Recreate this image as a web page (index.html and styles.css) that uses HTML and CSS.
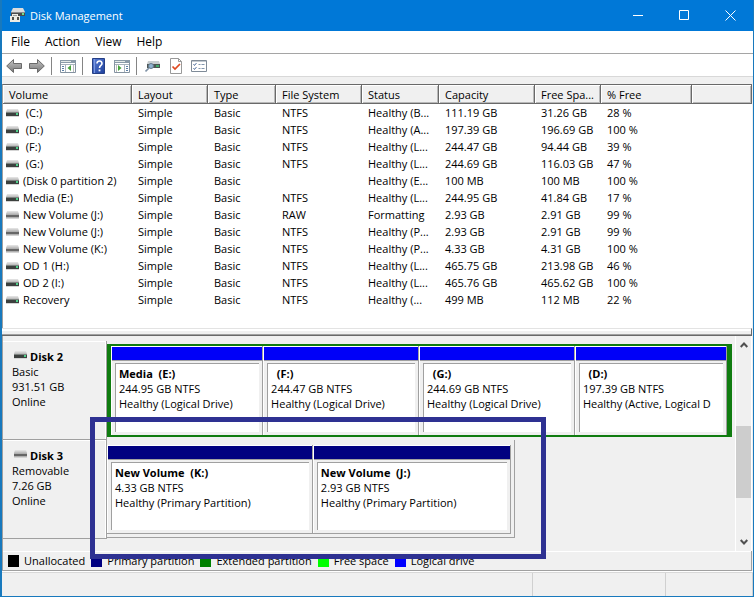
FILE: index.html
```html
<!DOCTYPE html>
<html lang="en">
<head>
<meta charset="utf-8">
<title>Disk Management</title>
<link rel="stylesheet" href="styles.css">
</head>
<body>
<svg class="defs" aria-hidden="true">
  <defs>
    <linearGradient id="lid" x1="0" y1="0" x2="0" y2="1"><stop offset="0" stop-color="#e8e8e8"/><stop offset="1" stop-color="#b8b8b8"/></linearGradient>
    <linearGradient id="steel" x1="0" y1="0" x2="0" y2="1"><stop offset="0" stop-color="#c4c4c4"/><stop offset="1" stop-color="#777"/></linearGradient>
    <linearGradient id="book" x1="0" y1="0" x2="1" y2="1"><stop offset="0" stop-color="#5b7fd6"/><stop offset="1" stop-color="#1d3f9c"/></linearGradient>
    <symbol id="drive" viewBox="0 0 13 8"><path d="M1 0h11l1 3H0z" fill="url(#lid)"/><path d="M0 3h13v4H0z" fill="#3c403e"/><path d="M0 3h13v1H0z" fill="#7d8380"/><path d="M10 4h2v2h-2z" fill="#4fd08a"/><path d="M0 7h13v1H0z" fill="#d4d4d4"/></symbol>
    <symbol id="removable" viewBox="0 0 13 8"><path d="M1 0h11l1 3H0z" fill="url(#lid)"/><path d="M0 3h13v4H0z" fill="#b0b0b0"/><path d="M0 4h13v2H0z" fill="#666"/><path d="M0 7h13v1H0z" fill="#d4d4d4"/></symbol>
  </defs>
</svg>
<div class="window">
  <header class="titlebar">
    <svg class="app-icon" viewBox="0 0 16 15"><path d="M4 0h10l2 4H2z" fill="#dcdcdc"/><path d="M2 4h14v4H2z" fill="#4b4b4b"/><path d="M2 4h14v1H2z" fill="#8b8b8b"/><path d="M13 5h2v2h-2z" fill="#6fe08f"/><path d="M3 6h6v2h2v6H1V8h2z" fill="#ecebe4"/><path d="M4 7h4v1H4z" fill="#999"/><path d="M3 9h2v3H3zM8 9h2v3H8z" fill="#53504a"/></svg>
    <h1>Disk Management</h1>
    <button class="caption" aria-label="Minimize"><svg viewBox="0 0 11 11"><path d="M0 5.5h10"/></svg></button>
    <button class="caption" aria-label="Maximize"><svg viewBox="0 0 11 11"><path d="M.5 .5h9v9h-9z"/></svg></button>
    <button class="caption" aria-label="Close"><svg viewBox="0 0 11 11"><path d="M.5 .5l10 10M10.5 .5l-10 10"/></svg></button>
  </header>
  <nav class="menubar"><button>File</button><button>Action</button><button>View</button><button>Help</button></nav>
  <div class="toolbar">
    <button aria-label="Back"><svg viewBox="0 0 16 16"><path d="M.7 8L7.5 1.5v4h8v5h-8v4z" fill="url(#steel)" stroke="#6a6a6a"/></svg></button>
    <button aria-label="Forward"><svg viewBox="0 0 16 16"><path d="M15.3 8L8.5 1.5v4h-8v5h8v4z" fill="url(#steel)" stroke="#6a6a6a"/></svg></button>
    <i class="sep"></i>
    <button aria-label="Show or hide console tree"><svg viewBox="0 0 16 16"><path d="M.5 2.5h15v12H.5z" fill="#fff" stroke="#8492a0"/><path d="M0 2h16v3H0z" fill="#8a9aa8"/><path d="M1 3h10v1H1z" fill="#e1e8e6"/><path d="M1 6.5h14M5.5 6v8" stroke="#a8b4be"/><path d="M2 8.5h2M2 10.5h2M2 12.5h2" stroke="#5c7fa5"/><path d="M11 7v6L7.5 10z" fill="#46a33c"/><path d="M13.5 7v7" stroke="#bbb"/></svg></button>
    <i class="sep"></i>
    <button aria-label="Help"><svg viewBox="0 0 16 16"><path d="M1.5 .5h12v15h-12z" fill="url(#book)" stroke="#253f86"/><path d="M3.5 1v14" stroke="#7997df"/><path d="M6 5.5c0-3.500 5-3.200 5 0 0 2-2.500 2-2.500 4.500" fill="none" stroke="#fff" stroke-width="1.6"/><path d="M7.6 11.5h1.8v1.8H7.6z" fill="#fff"/></svg></button>
    <button aria-label="Show or hide action pane"><svg viewBox="0 0 16 16"><path d="M.5 2.5h15v12H.5z" fill="#fff" stroke="#8492a0"/><path d="M0 2h16v3H0z" fill="#8a9aa8"/><path d="M1 3h10v1H1z" fill="#e1e8e6"/><path d="M1 6.5h14M10.5 6v8" stroke="#a8b4be"/><path d="M12 8.5h2M12 10.5h2M12 12.5h2" stroke="#5c7fa5"/><path d="M4 7v6l3.500-3z" fill="#46a33c"/><path d="M2.500 7v7" stroke="#bbb"/></svg></button>
    <i class="sep"></i>
    <button aria-label="Rescan disks"><svg viewBox="0 0 16 16"><path d="M3 3h11l1 3H2z" fill="#c9ced0"/><path d="M2 6h13v4H2z" fill="#4d5654"/><path d="M11 7h3v2h-3z" fill="#3fa969"/><circle cx="6" cy="8" r="2.500" fill="#8fb3d0" stroke="#667c8e"/><path d="M4 10l-3.500 3.500" stroke="#7e91a5" stroke-width="1.6"/></svg></button>
    <button aria-label="Properties"><svg viewBox="0 0 16 16"><path d="M2.5 .5h8l3 3v12h-11z" fill="#fff" stroke="#999"/><path d="M10.5 .5v3h3" fill="none" stroke="#999"/><path d="M4.500 8.500l2.500 2.500 5-5" fill="none" stroke="#e04a20" stroke-width="1.7"/></svg></button>
    <button aria-label="Options"><svg viewBox="0 0 16 16"><path d="M.5 2.5h15v11H.5z" fill="#fff" stroke="#7f8b98"/><path d="M1 3h14v1H1z" fill="#c2cad2"/><path d="M2.500 6l1 1.500 2-2.500M2.500 10l1 1.500L5.500 9" fill="none" stroke="#5876a4"/><path d="M7.500 6.500h2M10.500 6.500h3M7.500 10.500h2M10.500 10.500h3" stroke="#8296ae"/></svg></button>
  </div>
  <main>
    <section class="volumes">
      <table>
        <colgroup><col class="c-volume"><col class="c-layout"><col class="c-type"><col class="c-fs"><col class="c-status"><col class="c-capacity"><col class="c-free"><col class="c-percent"><col></colgroup>
        <thead><tr><th>Volume</th><th>Layout</th><th>Type</th><th>File System</th><th>Status</th><th>Capacity</th><th>Free Spa...</th><th>% Free</th><th></th></tr></thead>
        <tbody>
          <tr><td><svg class="drive"><use href="#drive"/></svg>&nbsp;(C:)</td><td>Simple</td><td>Basic</td><td>NTFS</td><td>Healthy (B...</td><td>111.19 GB</td><td>31.26 GB</td><td>28 %</td><td></td></tr>
          <tr><td><svg class="drive"><use href="#drive"/></svg>&nbsp;(D:)</td><td>Simple</td><td>Basic</td><td>NTFS</td><td>Healthy (A...</td><td>197.39 GB</td><td>196.69 GB</td><td>100 %</td><td></td></tr>
          <tr><td><svg class="drive"><use href="#drive"/></svg>&nbsp;(F:)</td><td>Simple</td><td>Basic</td><td>NTFS</td><td>Healthy (L...</td><td>244.47 GB</td><td>94.44 GB</td><td>39 %</td><td></td></tr>
          <tr><td><svg class="drive"><use href="#drive"/></svg>&nbsp;(G:)</td><td>Simple</td><td>Basic</td><td>NTFS</td><td>Healthy (L...</td><td>244.69 GB</td><td>116.03 GB</td><td>47 %</td><td></td></tr>
          <tr><td><svg class="drive"><use href="#drive"/></svg>(Disk 0 partition 2)</td><td>Simple</td><td>Basic</td><td></td><td>Healthy (E...</td><td>100 MB</td><td>100 MB</td><td>100 %</td><td></td></tr>
          <tr><td><svg class="drive"><use href="#drive"/></svg>Media (E:)</td><td>Simple</td><td>Basic</td><td>NTFS</td><td>Healthy (L...</td><td>244.95 GB</td><td>41.84 GB</td><td>17 %</td><td></td></tr>
          <tr><td><svg class="drive"><use href="#removable"/></svg>New Volume (J:)</td><td>Simple</td><td>Basic</td><td>RAW</td><td>Formatting</td><td>2.93 GB</td><td>2.91 GB</td><td>99 %</td><td></td></tr>
          <tr><td><svg class="drive"><use href="#removable"/></svg>New Volume (J:)</td><td>Simple</td><td>Basic</td><td>NTFS</td><td>Healthy (P...</td><td>2.93 GB</td><td>2.91 GB</td><td>99 %</td><td></td></tr>
          <tr><td><svg class="drive"><use href="#removable"/></svg>New Volume (K:)</td><td>Simple</td><td>Basic</td><td>NTFS</td><td>Healthy (P...</td><td>4.33 GB</td><td>4.31 GB</td><td>100 %</td><td></td></tr>
          <tr><td><svg class="drive"><use href="#drive"/></svg>OD 1 (H:)</td><td>Simple</td><td>Basic</td><td>NTFS</td><td>Healthy (L...</td><td>465.75 GB</td><td>213.98 GB</td><td>46 %</td><td></td></tr>
          <tr><td><svg class="drive"><use href="#drive"/></svg>OD 2 (I:)</td><td>Simple</td><td>Basic</td><td>NTFS</td><td>Healthy (L...</td><td>465.76 GB</td><td>465.62 GB</td><td>100 %</td><td></td></tr>
          <tr><td><svg class="drive"><use href="#drive"/></svg>Recovery</td><td>Simple</td><td>Basic</td><td>NTFS</td><td>Healthy (...</td><td>499 MB</td><td>112 MB</td><td>22 %</td><td></td></tr>
        </tbody>
      </table>
    </section>
    <div class="splitter"></div>
    <section class="graphical">
      <div class="disks">
        <article class="disk">
          <div class="disk-info"><h2><svg class="drive"><use href="#drive"/></svg>Disk 2</h2><p>Basic</p><p>931.51 GB</p><p>Online</p></div>
          <div class="extended">
            <div class="part logical"><div class="box"><h3>Media&nbsp; (E:)</h3><p>244.95 GB NTFS</p><p>Healthy (Logical Drive)</p></div></div>
            <div class="part logical wide"><div class="box"><h3>&nbsp; (F:)</h3><p>244.47 GB NTFS</p><p>Healthy (Logical Drive)</p></div></div>
            <div class="part logical wide"><div class="box"><h3>&nbsp; (G:)</h3><p>244.69 GB NTFS</p><p>Healthy (Logical Drive)</p></div></div>
            <div class="part logical"><div class="box"><h3>&nbsp; (D:)</h3><p>197.39 GB NTFS</p><p>Healthy (Active, Logical D</p></div></div>
          </div>
        </article>
        <article class="disk">
          <div class="disk-info"><h2><svg class="drive"><use href="#removable"/></svg>Disk 3</h2><p>Removable</p><p>7.26 GB</p><p>Online</p></div>
          <div class="primary-area">
            <div class="part primary"><div class="box"><h3>New Volume&nbsp; (K:)</h3><p>4.33 GB NTFS</p><p>Healthy (Primary Partition)</p></div></div>
            <div class="part primary"><div class="box"><h3>New Volume&nbsp; (J:)</h3><p>2.93 GB NTFS</p><p>Healthy (Primary Partition)</p></div></div>
          </div>
        </article>
        <div class="highlight"></div>
      </div>
      <div class="scrollbar">
        <button aria-label="Scroll up"><svg viewBox="0 0 8 6"><path d="M.7 5L4 1.5 7.3 5"/></svg></button>
        <div class="track"><div class="thumb"></div></div>
        <button aria-label="Scroll down"><svg viewBox="0 0 8 6"><path d="M.7 1L4 4.5 7.3 1"/></svg></button>
      </div>
    </section>
    <ul class="legend">
      <li><i class="swatch unallocated"></i>Unallocated</li>
      <li><i class="swatch primary-key"></i>Primary partition</li>
      <li><i class="swatch extended-key"></i>Extended partition</li>
      <li><i class="swatch free-key"></i>Free space</li>
      <li><i class="swatch logical-key"></i>Logical drive</li>
    </ul>
  </main>
  <footer class="statusbar"><span class="main-cell"></span><span class="mid-cell"></span><span class="end-cell"></span></footer>
</div>
</body>
</html>
```
FILE: styles.css
```css
* { box-sizing: border-box; }
body {
  margin: 0;
  font: 11px/15px "Open Sans", "Noto Sans", sans-serif;
  color: #000;
}
h1, h2, h3, p, ul { margin: 0; padding: 0; font-size: inherit; }
button { border: 0; padding: 0; background: none; font: inherit; color: inherit; }
svg { display: block; flex: none; }
.defs { position: absolute; width: 0; height: 0; }

.window {
  display: flex;
  flex-direction: column;
  min-height: 100vh;
  border: solid #1879bd;
  border-width: 0 1px 1px 2px;
  background: #f0f0f0;
}

.titlebar {
  display: flex;
  align-items: center;
  height: 31px;
  padding-left: 7px;
  background: #0078d7;
  color: #fff;
}
.titlebar h1 { flex: 1; padding-left: 5px; font-weight: 400; }
.app-icon { width: 16px; height: 15px; }
.caption { display: grid; place-items: center; width: 46px; height: 31px; }
.caption svg { width: 11px; height: 11px; fill: none; stroke: #fff; }

.menubar {
  display: flex;
  gap: 1px;
  height: 23px;
  padding: 0 0 2px 2px;
  border-bottom: 1px solid #a5a5a5;
  background: #fff;
  font-size: 12px;
}
.menubar button { padding: 0 7px; }

.toolbar {
  display: flex;
  align-items: center;
  gap: 7px;
  height: 23px;
  padding: 2px 0 0 4px;
  border-bottom: 1px solid #d8d8d8;
  background: #fff;
}
.toolbar svg { width: 16px; height: 16px; }
.sep { width: 1px; height: 18px; margin: 0 1px 0 -1px; background: #858585; }

main { flex: 1; display: flex; flex-direction: column; margin: 7px 1px 0 0; }

.volumes {
  height: 244px;
  border-top: 1px solid #696969;
  border-left: 1px solid #a0a0a0;
  background: #fff;
}
table { width: 100%; border-collapse: separate; border-spacing: 0; table-layout: fixed; }
.c-volume { width: 129px; }
.c-layout { width: 76px; }
.c-type { width: 68px; }
.c-fs { width: 86px; }
.c-status { width: 77px; }
.c-capacity { width: 96px; }
.c-free { width: 66px; }
.c-percent { width: 91px; }
th {
  height: 19px;
  padding: 0 0 0 6px;
  border: solid #696969;
  border-width: 0 1px 1px 0;
  background: #f0f0f0;
  box-shadow: inset 1px 1px #fff, inset -1px -1px #b8b8b8;
  font-weight: 400;
  text-align: left;
  white-space: nowrap;
}
td { height: 17px; padding: 0 0 0 6px; line-height: 17px; white-space: nowrap; }
td:first-child { display: flex; align-items: center; gap: 4px; padding-left: 3px; }
.drive { width: 13px; height: 8px; }

.splitter {
  height: 8px;
  border-top: 1px solid #e3e3e3;
  border-bottom: 1px solid #696969;
  border-right: 1px solid #696969;
  box-shadow: inset 0 2px #fff, inset 0 -1px #a0a0a0;
}

.graphical { display: flex; border-left: 1px solid #a0a0a0; }
.disks { position: relative; flex: 1; min-width: 0; height: 215px; padding-top: 5px; }
.disk { display: flex; height: 99px; }
.disk-info {
  flex: none;
  width: 104px;
  padding: 8px 0 0 9px;
  border: solid #a0a0a0;
  border-width: 0 1px 1px 0;
  box-shadow: inset 0 1px #fff, inset -1px 0 #fff;
}
.disk-info h2 { display: flex; gap: 3px; padding-left: 2px; }
.disk-info .drive { margin-top: 2px; }

.extended {
  flex: 1;
  display: flex;
  min-width: 0;
  height: 93px;
  margin: 3px 3px 0 0;
  border: solid #107c10;
  border-width: 2px 5px 2px 4px;
}
.primary-area {
  display: flex;
  width: 408px;
  height: 98px;
  padding: 5px 3px 3px 0;
  border: solid #a0a0a0;
  border-width: 0 1px 1px 0;
}
.part {
  display: flex;
  flex-direction: column;
  min-width: 0;
  padding: 1px 3px 3px 4px;
  border-right: 1px solid #a0a0a0;
  box-shadow: inset 1px 1px #fff;
}
.part::before { content: ""; height: 13px; margin: 0 -3px 3px; box-shadow: 0 1px #a0a0a0; }
.logical { flex: 152 1 0; }
.wide { flex-grow: 156; }
.logical::before { background: #0000f8; }
.primary { flex: 198 1 0; border-bottom: 1px solid #a0a0a0; }
.primary:first-child { flex-grow: 206; }
.primary::before { background: #000080; }
.box {
  flex: 1;
  overflow: hidden;
  padding: 2px 0 0 3px;
  border: solid #a0a0a0;
  border-width: 1px 0 0 1px;
  background: #fff;
  white-space: nowrap;
}

.highlight {
  position: absolute;
  z-index: 1;
  left: 87px;
  top: 81px;
  width: 456px;
  height: 142px;
  border: 5px solid #2e3192;
}

.scrollbar {
  display: flex;
  flex-direction: column;
  width: 17px;
  border-left: 1px solid #fff;
  border-right: 1px solid #fff;
}
.scrollbar button { display: grid; place-items: center; height: 18px; }
.scrollbar svg { width: 8px; height: 6px; fill: none; stroke: #505050; stroke-width: 2; }
.track { flex: 1; display: flex; flex-direction: column; justify-content: flex-end; padding-bottom: 35px; }
.thumb { height: 72px; background: #cdcdcd; }

.legend {
  display: flex;
  align-items: center;
  gap: 6px;
  height: 20px;
  padding-left: 5px;
  border: solid #a0a0a0;
  border-width: 0 1px 1px;
  box-shadow: inset 0 1px #fff;
  list-style: none;
}
.legend li { display: flex; align-items: center; gap: 5px; white-space: nowrap; }
.swatch { width: 11px; height: 12px; }
.unallocated { background: #000; }
.primary-key { background: #000080; }
.extended-key { background: #008000; }
.free-key { background: #00ff00; }
.logical-key { background: #0000ff; }

.statusbar {
  display: flex;
  height: 24px;
  border-top: 1px solid #d8d8d8;
  box-shadow: 0 -1px #fff;
}
.statusbar span { border-right: 1px solid #d0d0d0; }
.main-cell { flex: 1; }
.mid-cell { width: 133px; }
.end-cell { width: 87px; }
```
